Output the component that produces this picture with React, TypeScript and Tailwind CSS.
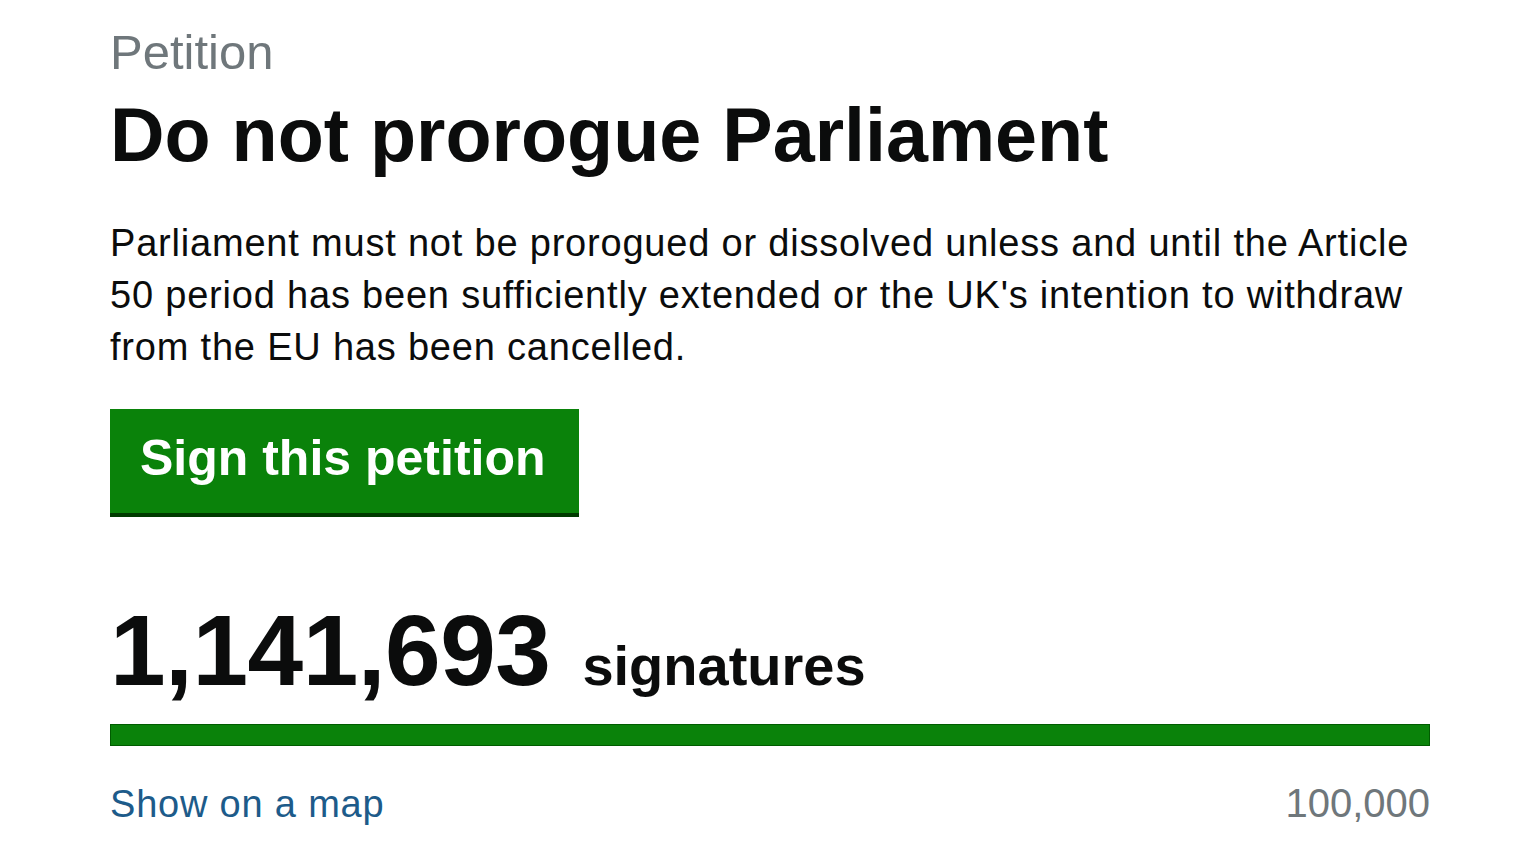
export default function App() {
    const font = { fontFamily: '"Liberation Sans", Arial, sans-serif' };

    return (
        <div className="min-h-screen w-full bg-white" style={font}>
            <main className="ml-[110px] w-[1320px] pt-[28px]">
                <p className="text-[49px] leading-none text-[#6f777b]">Petition</p>
                <h1 className="mt-[21px] text-[75.5px] font-bold leading-none text-[#0b0c0c]">
                    Do not prorogue Parliament
                </h1>

                <p className="mt-[43px] text-[38px] leading-[52px] tracking-[0.8px] text-[#0b0c0c]">
                    Parliament must not be prorogued or dissolved unless and until the Article 50 period has been
                    sufficiently extended or the UK's intention to withdraw from the EU has been cancelled.
                </p>

                <button className="mt-[36px] block h-[108px] w-[469px] border-b-4 border-[#003a00] bg-[#0a820a] pl-[30px] pb-[4px] text-left text-[50px] font-bold leading-none text-white">
                    <span className="relative top-[-1px]">Sign this petition</span>
                </button>

                {/* signature count */}
                <div className="mt-[83px] flex items-baseline gap-[32px] text-[#0b0c0c]">
                    <span className="text-[100px] font-bold leading-none tracking-[-0.5px]">1,141,693</span>
                    <span className="text-[56px] font-bold leading-none">signatures</span>
                </div>

                <div className="mt-[24px] h-[22px] w-full border border-[#005c00] bg-[#0a820a]" />

                <div className="mt-[37px] flex items-baseline justify-between">
                    <a href="#" className="text-[38px] leading-none tracking-[0.8px] text-[#1d5b8a]">
                        Show on a map
                    </a>
                    <span className="text-[40px] leading-none text-[#6f777b]">100,000</span>
                </div>
            </main>
        </div>
    );
}
